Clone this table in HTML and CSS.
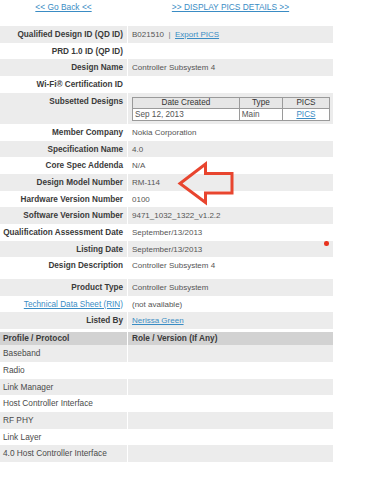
FILE: index.html
```html
<!DOCTYPE html>
<html>
<head>
<meta charset="utf-8">
<link rel="stylesheet" href="styles.css">
</head>
<body>
<div class="page">
  <div class="toplinks">
    <a href="#" class="toplink">&lt;&lt; Go Back &lt;&lt;</a>
    <a href="#" class="toplink">&gt;&gt; DISPLAY PICS DETAILS &gt;&gt;</a>
  </div>

  <div class="details">
    <div class="row alt"><div class="lbl">Qualified Design ID (QD ID)</div><div class="val">B021510 <span class="sep">&nbsp;|&nbsp;</span> <a href="#" class="link">Export PICS</a></div></div>
    <div class="row"><div class="lbl">PRD 1.0 ID (QP ID)</div><div class="val"></div></div>
    <div class="row alt"><div class="lbl">Design Name</div><div class="val">Controller Subsystem 4</div></div>
    <div class="row"><div class="lbl">Wi-Fi® Certification ID</div><div class="val"></div></div>
    <div class="row alt subs"><div class="lbl">Subsetted Designs</div><div class="val">
      <table class="subtable">
        <tr class="subhead"><td class="c1">Date Created</td><td class="c2">Type</td><td class="c3">PICS</td></tr>
        <tr><td class="c1 left">Sep 12, 2013</td><td class="c2 left">Main</td><td class="c3"><a href="#" class="link">PICS</a></td></tr>
      </table>
    </div></div>
    <div class="row"><div class="lbl">Member Company</div><div class="val">Nokia Corporation</div></div>
    <div class="row alt"><div class="lbl">Specification Name</div><div class="val">4.0</div></div>
    <div class="row"><div class="lbl">Core Spec Addenda</div><div class="val">N/A</div></div>
    <div class="row alt"><div class="lbl">Design Model Number</div><div class="val">RM-114</div></div>
    <div class="row"><div class="lbl">Hardware Version Number</div><div class="val">0100</div></div>
    <div class="row alt"><div class="lbl">Software Version Number</div><div class="val">9471_1032_1322_v1.2.2</div></div>
    <div class="row"><div class="lbl">Qualification Assessment Date</div><div class="val">September/13/2013</div></div>
    <div class="row alt"><div class="lbl">Listing Date</div><div class="val">September/13/2013</div></div>
    <div class="row desc"><div class="lbl">Design Description</div><div class="val">Controller Subsystem 4</div></div>
    <div class="row alt"><div class="lbl">Product Type</div><div class="val">Controller Subsystem</div></div>
    <div class="row"><div class="lbl"><a href="#" class="link normal">Technical Data Sheet (RIN)</a></div><div class="val">(not available)</div></div>
    <div class="row alt"><div class="lbl">Listed By</div><div class="val"><a href="#" class="link">Nerissa Green</a></div></div>
  </div>

  <div class="protocols">
    <div class="prow phead"><div class="pc">Profile / Protocol</div><div class="pc">Role / Version (If Any)</div></div>
    <div class="prow alt"><div class="pc">Baseband</div><div class="pc"></div></div>
    <div class="prow"><div class="pc">Radio</div><div class="pc"></div></div>
    <div class="prow alt"><div class="pc">Link Manager</div><div class="pc"></div></div>
    <div class="prow"><div class="pc">Host Controller Interface</div><div class="pc"></div></div>
    <div class="prow alt"><div class="pc">RF PHY</div><div class="pc"></div></div>
    <div class="prow"><div class="pc">Link Layer</div><div class="pc"></div></div>
    <div class="prow alt"><div class="pc">4.0 Host Controller Interface</div><div class="pc"></div></div>
  </div>

  <svg class="arrow" width="60" height="48" viewBox="176 160 60 48">
    <path d="M180 183.5 L205.5 164 L205.5 173.5 L232 173.5 L232 193 L205.5 193 L205.5 202.5 Z" fill="none" stroke="#e8452f" stroke-width="3" stroke-linejoin="miter"/>
  </svg>
  <div class="dot"></div>
</div>
</body>
</html>
```

FILE: styles.css
```css
html, body {
  margin: 0;
  padding: 0;
  background: #ffffff;
}

body {
  font-family: "Liberation Sans", Arial, sans-serif;
  color: #555555;
}

.page {
  position: relative;
  width: 333px;
}

.toplinks {
  display: grid;
  grid-template-columns: 127px 1fr;
  column-gap: 1px;
  height: 26px;
}

.toplink {
  justify-self: center;
  font-size: 8.4px;
  line-height: 11px;
  padding-top: 2px;
  color: #3a8cc4;
  text-decoration: underline;
}

.link {
  color: #3a8cc4;
  text-decoration: underline;
}

.link.normal {
  font-weight: normal;
  font-size: 8.2px;
}

.details {
  display: flex;
  flex-direction: column;
}

.row {
  display: grid;
  grid-template-columns: 127px 1fr;
  column-gap: 1px;
  height: 16.67px;
}

.row.subs {
  height: 31.33px;
}

.row.desc {
  height: 21.67px;
}

.row.alt .lbl,
.row.alt .val {
  background: #ececec;
}

.lbl {
  text-align: right;
  font-weight: bold;
  font-size: 8.2px;
  color: #3a3a3a;
  padding: 3px 4px 0 0;
  line-height: 11px;
  white-space: nowrap;
}

.val {
  font-size: 8px;
  color: #555555;
  padding: 3px 0 0 4px;
  line-height: 11px;
  white-space: nowrap;
}

.sep {
  color: #777777;
}

.subs .val {
  padding-top: 4.3px;
}

.subtable {
  border-collapse: collapse;
  width: 198px;
  border: 1px solid #6a6a6a;
  font-size: 8.2px;
  background: #ffffff;
}

.subtable td {
  border: 1px solid #9a9a9a;
  padding: 0 2px;
  height: 10.5px;
  line-height: 10px;
  text-align: center;
  color: #444444;
}

.subtable td.left {
  text-align: left;
  color: #555555;
}

.subtable .subhead td {
  background: #e6e6e6;
  color: #333333;
}

.subtable .c1 { width: 104px; }
.subtable .c2 { width: 39px; }
.subtable .c3 { width: 43px; }

.protocols {
  display: flex;
  flex-direction: column;
  margin-top: 3.5px;
}

.prow {
  display: grid;
  grid-template-columns: 127px 1fr;
  column-gap: 1px;
  height: 16.67px;
}

.prow .pc {
  font-size: 8.3px;
  color: #4a4a4a;
  padding: 3px 0 0 3px;
  line-height: 11px;
  white-space: nowrap;
}

.prow.alt .pc {
  background: #ececec;
}

.prow.phead {
  height: 13px;
}

.prow.phead .pc {
  background: #d2d2d2;
  font-weight: bold;
  color: #3a3a3a;
  padding-top: 1px;
}

.prow.phead .pc + .pc {
  padding-left: 4px;
}

.arrow {
  position: absolute;
  left: 176px;
  top: 160px;
}

.dot {
  position: absolute;
  left: 324px;
  top: 241px;
  width: 4.5px;
  height: 4.5px;
  border-radius: 50%;
  background: #e8321e;
}
```
